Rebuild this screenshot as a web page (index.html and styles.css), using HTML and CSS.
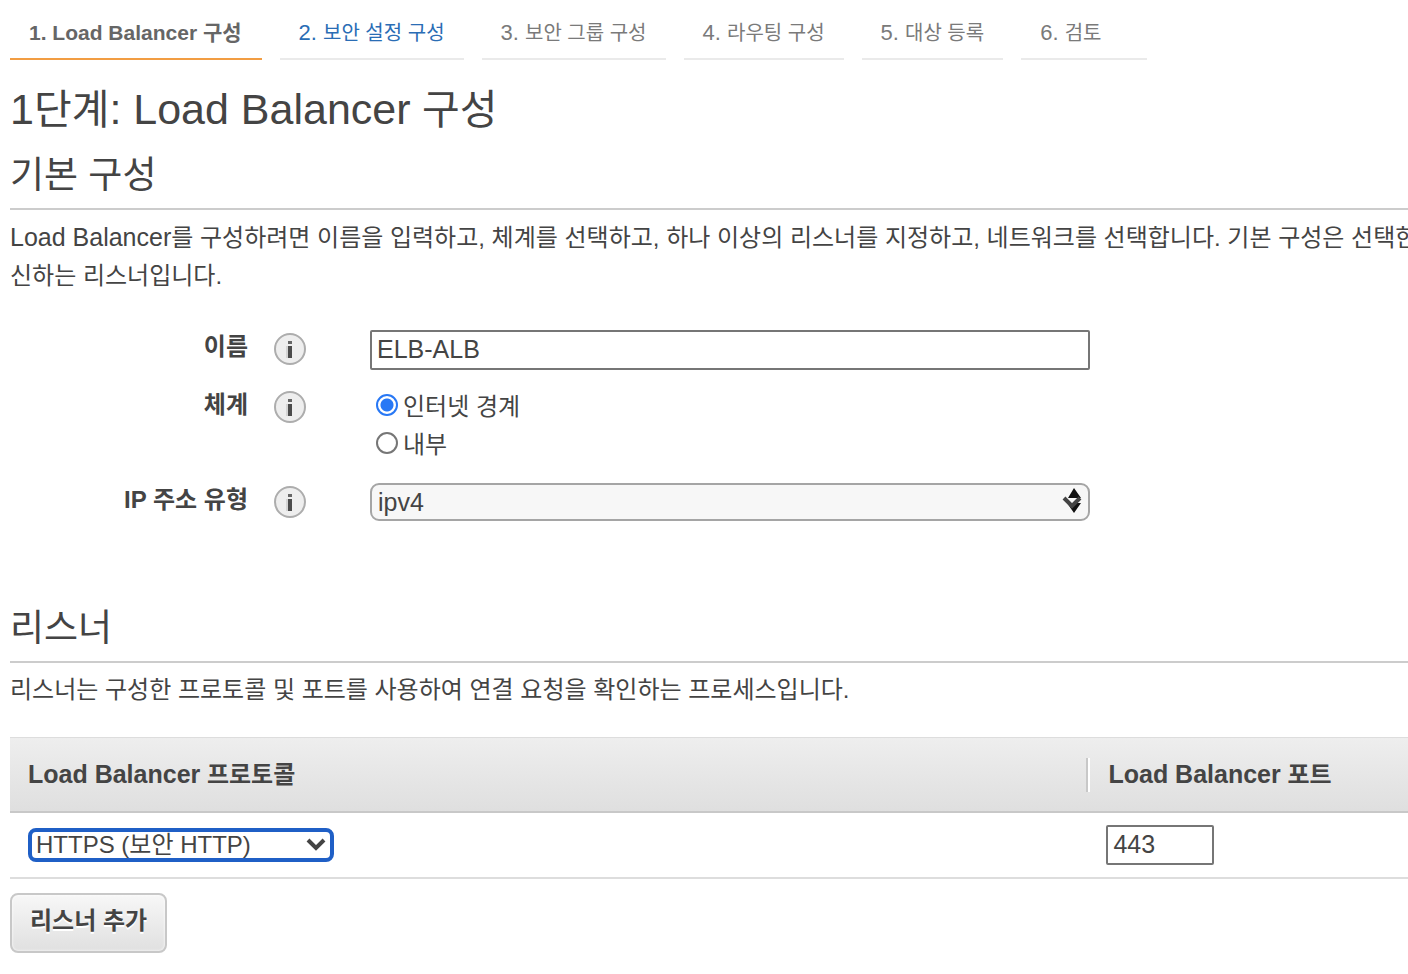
FILE: index.html
```html
<!DOCTYPE html>
<html lang="ko">
<head>
<meta charset="utf-8">
<title>Load Balancer 구성</title>
<link rel="stylesheet" href="styles.css">
</head>
<body>
<svg class="defs" aria-hidden="true">
  <symbol id="info" viewBox="0 0 34 34">
    <circle cx="17" cy="17" r="15" fill="#eeeeee" stroke="#adadad" stroke-width="2"/>
    <rect x="15" y="9" width="4" height="3" fill="#666666"/>
    <rect x="15" y="14" width="4" height="12" fill="#4c4c4c"/>
    <path d="M14 14v12" stroke="#bbbbbb"/>
  </symbol>
</svg>
<nav class="steps" aria-label="단계">
  <a class="step current" href="#step1">1. Load Balancer 구성</a>
  <a class="step next" href="#step2">2. <span class="ko">보안 설정 구성</span></a>
  <a class="step" href="#step3">3. <span class="ko">보안 그룹 구성</span></a>
  <a class="step" href="#step4">4. <span class="ko">라우팅 구성</span></a>
  <a class="step" href="#step5">5. <span class="ko">대상 등록</span></a>
  <a class="step last" href="#step6">6. <span class="ko">검토</span></a>
</nav>
<main>
  <h1 class="title"><span class="latin">1</span>단계<span class="latin">: Load Balancer</span> 구성</h1>
  <section>
    <h2 class="heading">기본 구성</h2>
    <p class="text"><span class="latin">Load Balancer</span>를 구성하려면 이름을 입력하고, 체계를 선택하고, 하나 이상의 리스너를 지정하고, 네트워크를 선택합니다. 기본 구성은 선택한<br>신하는 리스너입니다.</p>
    <form class="form">
      <div class="row">
        <label class="label" for="name">이름</label>
        <button class="info" type="button" aria-label="이름 정보"><svg><use href="#info"/></svg></button>
        <input class="field" id="name" type="text" value="ELB-ALB">
      </div>
      <div class="row" role="radiogroup" aria-labelledby="scheme">
        <span class="label" id="scheme">체계</span>
        <button class="info" type="button" aria-label="체계 정보"><svg><use href="#info"/></svg></button>
        <div class="options">
          <label class="option"><input class="radio" type="radio" name="scheme" checked>인터넷 경계</label>
          <label class="option"><input class="radio" type="radio" name="scheme">내부</label>
        </div>
      </div>
      <div class="row">
        <label class="label" for="iptype">IP 주소 유형</label>
        <button class="info" type="button" aria-label="IP 주소 유형 정보"><svg><use href="#info"/></svg></button>
        <div class="picker">
          <select class="select" id="iptype"><option>ipv4</option></select>
          <svg class="sort" viewBox="0 0 20 26" aria-hidden="true"><path d="M12 0l7 10H6zM5 15h14l-7 10z" fill="#111111"/><path d="M9 12h8" stroke="#f7f7f7" stroke-width="3"/><path d="M2 10l8 8 8-8" fill="none" stroke="#444444" stroke-width="4"/></svg>
        </div>
      </div>
    </form>
  </section>
  <section>
    <h2 class="heading">리스너</h2>
    <p class="text">리스너는 구성한 프로토콜 및 포트를 사용하여 연결 요청을 확인하는 프로세스입니다.</p>
    <table class="listeners">
      <thead>
        <tr><th class="protocol" id="protocol"><span class="latin">Load Balancer</span> 프로토콜</th><th class="port" id="port"><span class="latin">Load Balancer</span> 포트</th></tr>
      </thead>
      <tbody>
        <tr>
          <td><div class="protocol-picker">
            <select class="protocol-select" aria-labelledby="protocol"><option>HTTPS (보안 HTTP)</option></select>
            <svg class="chevron" viewBox="0 0 20 14" aria-hidden="true"><path d="M2 2l8 8 8-8" fill="none" stroke="#444444" stroke-width="4"/></svg>
          </div></td>
          <td><input class="port-field" type="text" value="443" aria-labelledby="port"></td>
        </tr>
      </tbody>
    </table>
    <button class="add" type="button">리스너 추가</button>
  </section>
</main>
</body>
</html>
```
FILE: styles.css
```css
* {
  box-sizing: border-box;
}

body {
  margin: 0;
  padding-left: 10px;
  overflow-x: hidden;
  background: #ffffff;
  color: #444444;
  font: 24px/38px "Liberation Sans", "Noto Sans CJK KR", sans-serif;
}

input,
select,
button {
  margin: 0;
  color: #444444;
  font-family: inherit;
}

.defs {
  display: none;
}

.steps {
  display: flex;
  gap: 18px;
  white-space: nowrap;
}

.step {
  height: 60px;
  padding: 14px 19px 0;
  border-bottom: 2px solid #eaeaea;
  color: #7a7a7a;
  font-size: 22px;
  line-height: 37px;
  text-decoration: none;
}

.ko {
  font-size: 20px;
}

.current {
  padding: 14px 20px 0 19px;
  border-color: #f29d43;
  color: #666666;
  font-size: 21px;
  font-weight: bold;
}

.next {
  color: #2a6db5;
}

.last {
  min-width: 126px;
}

.title {
  margin: 20px 0 0;
  font-size: 41px;
  font-weight: normal;
  line-height: 58px;
}

.title .latin {
  font-size: 43px;
}

.heading {
  margin: 8px 0 8px;
  padding-bottom: 3px;
  border-bottom: 2px solid #cccccc;
  font-size: 37px;
  font-weight: normal;
  line-height: 58px;
}

.text {
  margin: 0;
  white-space: nowrap;
}

.text .latin {
  font-size: 25px;
}

.form {
  display: grid;
  padding: 35px 0 52px;
}

.row {
  display: flex;
  align-items: flex-start;
  margin-bottom: 18px;
}

.row:last-child {
  padding-top: 1px;
}

.label {
  width: 238px;
  font-weight: bold;
  line-height: 34px;
  text-align: right;
}

.info {
  width: 34px;
  height: 34px;
  margin: 2px 63px 0 25px;
  padding: 0;
  border: 0;
  background: none;
}

.info svg {
  display: block;
  width: 34px;
  height: 34px;
}

.field,
.port-field {
  width: 720px;
  height: 40px;
  padding: 0 5px 2px;
  border: 2px solid #767676;
  border-radius: 2px;
  background: #ffffff;
  font-size: 25px;
}

.options {
  padding: 0 6px;
}

.option {
  display: flex;
  align-items: center;
  gap: 5px;
}

.radio {
  width: 22px;
  height: 22px;
  margin-bottom: 4px;
  border: 2px solid #767676;
  border-radius: 50%;
  appearance: none;
}

.radio:checked {
  border-color: #2878f5;
  background: radial-gradient(circle, #2878f5 6px, #ffffff 7px);
}

.picker {
  position: relative;
}

.select {
  width: 720px;
  height: 38px;
  padding: 0 6px;
  border: 2px solid #a5a5a5;
  border-radius: 9px;
  background: #f7f7f7;
  font-size: 25px;
  appearance: none;
}

.sort {
  position: absolute;
  top: 5px;
  right: 8px;
  width: 20px;
  height: 26px;
}

.listeners {
  width: 100%;
  margin: 28px 0 14px;
  border-collapse: separate;
  border-spacing: 0;
}

.listeners th {
  height: 76px;
  padding: 0 18px;
  border-top: 1px solid #dddddd;
  border-bottom: 2px solid #c8c8c8;
  background: linear-gradient(#eeeeee, #dfdfdf);
  text-align: left;
}

.listeners .latin {
  font-size: 25px;
}

.listeners .protocol {
  width: 77%;
}

.listeners .port {
  padding-left: 22px;
  background: linear-gradient(#c8c8c8, #c8c8c8) 0 50% / 2px 34px no-repeat, linear-gradient(#ffffff, #ffffff) 2px 50% / 2px 34px no-repeat, linear-gradient(#eeeeee, #dfdfdf);
}

.listeners td {
  height: 66px;
  padding: 0 18px;
  border-bottom: 2px solid #dddddd;
}

.listeners td:last-child {
  padding-left: 20px;
}

.protocol-picker {
  position: relative;
  width: 306px;
}

.protocol-select {
  display: block;
  width: 100%;
  height: 34px;
  padding: 0 4px;
  border: 4px solid #1f5fc6;
  border-radius: 8px;
  outline: 0;
  background: #ffffff;
  font-size: 24px;
  line-height: 26px;
  appearance: none;
}

.chevron {
  position: absolute;
  top: 10px;
  right: 8px;
  width: 20px;
  height: 14px;
}

.port-field {
  display: block;
  width: 108px;
}

.add {
  height: 60px;
  padding: 0 18px 10px;
  border: 2px solid #c8c8c8;
  border-radius: 8px;
  background: linear-gradient(#f7f7f7, #e0e0e0);
  box-shadow: inset 0 0 3px #ffffff;
  font-size: 24px;
  font-weight: bold;
  text-shadow: 0 2px 0 #ffffff;
}
```
